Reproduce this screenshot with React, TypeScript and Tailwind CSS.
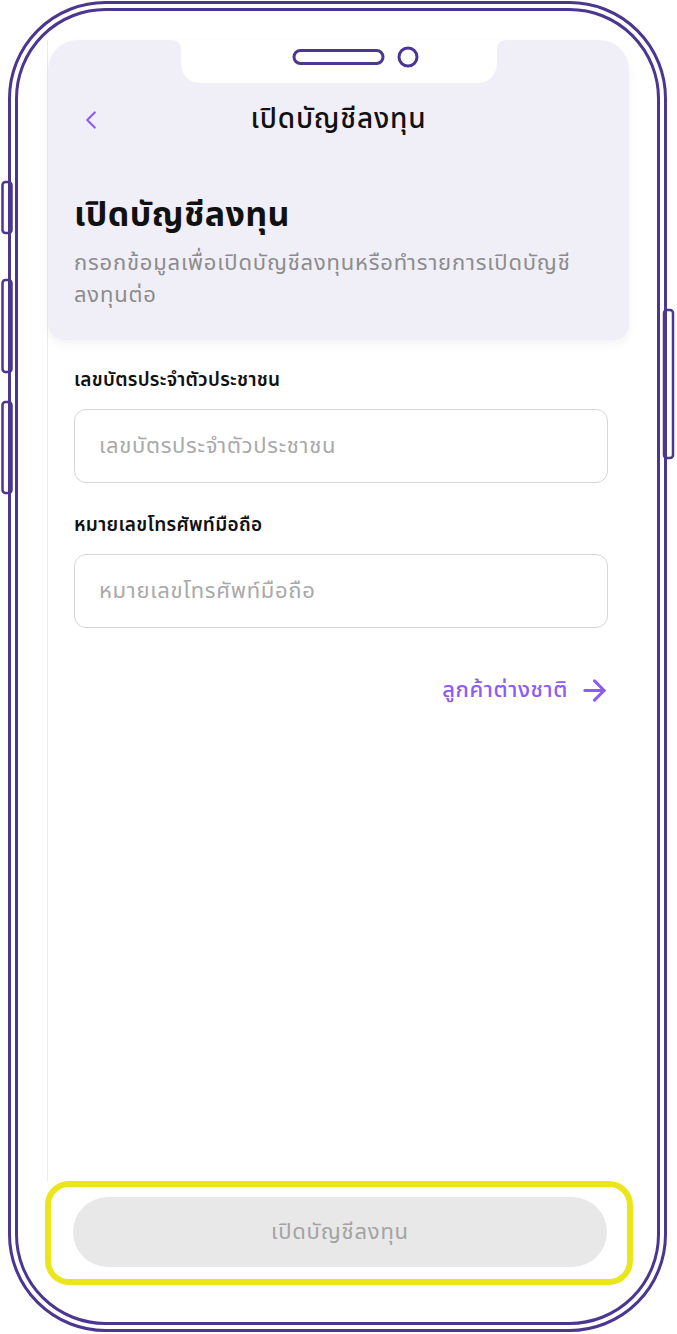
import React from 'react';
import { ChevronLeft, ArrowRight } from 'lucide-react';

const FONT = { fontFamily: "'Noto Sans Thai', 'Noto Sans', sans-serif" };

// Phone outline drawn over the page: frame lines, side keys, notch
function PhoneFrame() {
  const stroke = '#4b3690';
  return (
    <svg className="pointer-events-none absolute inset-0" width="677" height="1334" viewBox="0 0 677 1334" fill="none">
      <rect x="2.5" y="182" width="9" height="51" rx="3" fill="#fff" stroke={stroke} strokeWidth="2.5" />
      <rect x="2.5" y="280" width="9" height="92" rx="3" fill="#fff" stroke={stroke} strokeWidth="2.5" />
      <rect x="2.5" y="402" width="9" height="91" rx="3" fill="#fff" stroke={stroke} strokeWidth="2.5" />
      <rect x="664" y="310" width="9" height="148" rx="3" fill="#fff" stroke={stroke} strokeWidth="2.5" />
      <rect x="9.5" y="2.5" width="656" height="1328" rx="96" fill="none" stroke={stroke} strokeWidth="3" />
      <rect x="16.5" y="9.5" width="642" height="1314" rx="89" fill="none" stroke={stroke} strokeWidth="3" />
      <path d="M172 40 Q181 40 181 50 L181 61 Q181 83 203 83 L475 83 Q497 83 497 61 L497 50 Q497 40 506 40 Z" fill="#fff" />
      <rect x="294" y="50.5" width="89" height="13" rx="6.5" fill="#fff" stroke={stroke} strokeWidth="3" />
      <circle cx="408" cy="57" r="9" fill="#fff" stroke={stroke} strokeWidth="3" />
    </svg>
  );
}

function Field({ label }: { label: string }) {
  return (
    <div className="flex flex-col gap-[15px]">
      <label className="text-[19px] font-semibold leading-[26px] tracking-[0.3px] text-[#111]">{label}</label>
      <div className="flex h-[74px] items-center rounded-[12px] border border-[#d6d6d6] px-[24px]">
        <input
          placeholder={label}
          className="w-full bg-transparent text-[22px] tracking-[0.7px] text-[#222] placeholder:text-[#a9a9a9] focus:outline-none"
        />
      </div>
    </div>
  );
}

export default function App() {
  return (
    <div className="relative h-[1334px] w-[677px] overflow-hidden bg-white" style={FONT}>
      <div className="flex h-full flex-col pt-[40px]">
        <div className="ml-[47px] flex w-[582px] flex-1 flex-col border-l border-[#ebebf2]">
          <div className="flex h-[300px] flex-col rounded-t-[30px] rounded-b-[16px] bg-[#f0eff8] px-[26px] shadow-[0_4px_10px_rgba(0,0,0,0.05)]">
            <div className="relative mt-[60px] flex h-[40px] items-center justify-center">
              <ChevronLeft className="absolute left-[2px] h-[30px] w-[30px] text-[#8b5cf6]" strokeWidth={1.7} />
              <h1 className="text-[28px] font-medium tracking-[0.8px] text-[#111]">เปิดบัญชีลงทุน</h1>
            </div>
            <h2 className="mt-[54px] text-[34px] font-bold leading-[44px] tracking-[0.4px] text-[#111]">เปิดบัญชีลงทุน</h2>
            <p className="mt-[10px] text-[22px] leading-[32px] tracking-[0.8px] text-[#8c8c8c]">
              กรอกข้อมูลเพื่อเปิดบัญชีลงทุนหรือทำรายการเปิดบัญชี
              <br />
              ลงทุนต่อ
            </p>
          </div>

          <div className="flex flex-col gap-[30px] pt-[28px] pr-[21px] pl-[26px]">
            <Field label="เลขบัตรประจำตัวประชาชน" />
            <Field label="หมายเลขโทรศัพท์มือถือ" />
          </div>

          <div className="mt-[46px] flex justify-end pr-[18px]">
            <button className="flex items-center gap-[10px] text-[22px] font-medium tracking-[0.6px] text-[#8b5cf6]">
              ลูกค้าต่างชาติ
              <ArrowRight className="h-[33px] w-[33px]" strokeWidth={2.2} />
            </button>
          </div>
        </div>

        <div className="mb-[49px] ml-[45px] w-[588px] rounded-[24px] border-[6px] border-[#ebe619] pt-[10px] pr-[20px] pb-[12px] pl-[22px]">
          <button className="flex h-[70px] w-full items-center justify-center rounded-full bg-[#e8e8e8] text-[22px] tracking-[0.8px] text-[#a3a3a3]">
            เปิดบัญชีลงทุน
          </button>
        </div>
      </div>
      <PhoneFrame />
    </div>
  );
}
